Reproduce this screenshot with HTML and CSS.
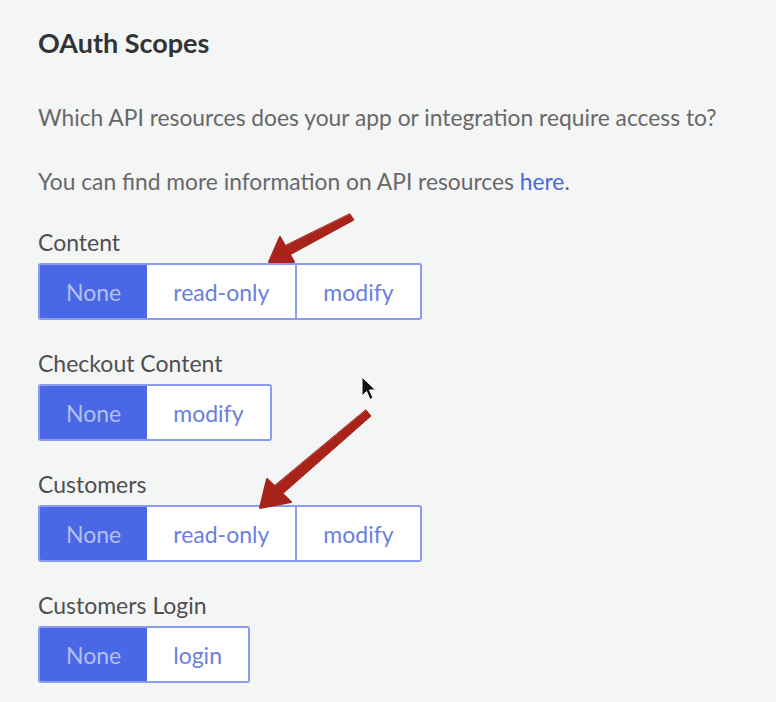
FILE: index.html
```html
<!DOCTYPE html>
<html lang="en">
<head>
<meta charset="utf-8">
<title>OAuth Scopes</title>
<link rel="stylesheet" href="styles.css">
</head>
<body>
<div class="panel">
  <h2 class="title">OAuth Scopes</h2>
  <p class="text first">Which API resources does your app or integration require access to?</p>
  <p class="text second">You can find more information on API resources <a class="link" href="#">here</a>.</p>

  <div class="field">
    <div class="label">Content</div>
    <div class="seg">
      <span class="opt active">None</span>
      <span class="opt">read-only</span>
      <span class="opt">modify</span>
    </div>
  </div>

  <div class="field">
    <div class="label">Checkout Content</div>
    <div class="seg">
      <span class="opt active">None</span>
      <span class="opt">modify</span>
    </div>
  </div>

  <div class="field">
    <div class="label">Customers</div>
    <div class="seg">
      <span class="opt active">None</span>
      <span class="opt">read-only</span>
      <span class="opt">modify</span>
    </div>
  </div>

  <div class="field">
    <div class="label">Customers Login</div>
    <div class="seg">
      <span class="opt active">None</span>
      <span class="opt">login</span>
    </div>
  </div>

  <svg class="overlay" width="776" height="702" viewBox="0 0 776 702" aria-hidden="true">
    <g fill="#a8231a" stroke="#a8231a" stroke-linecap="round" stroke-linejoin="round">
      <polygon points="350,214 354,220 286,257 281,248" stroke-width="1"/>
      <polygon points="269,262 280,237 294,262" stroke-width="2"/>
      <polygon points="366,410 371,416 279,497 271,489" stroke-width="1"/>
      <polygon points="260,508 267,479 291,502" stroke-width="2"/>
    </g>
    <path d="M362 377 L362 396 L366.5 391.5 L370 399.5 L373 398 L369.5 390 L375.5 390 Z" fill="#111" stroke="#fff" stroke-width="1"/>
  </svg>
</div>
</body>
</html>
```

FILE: styles.css
```css
html, body {
  margin: 0;
  padding: 0;
  background: #f4f5f5;
}

.panel {
  position: relative;
  width: 776px;
  height: 702px;
  box-sizing: border-box;
  padding: 27px 0 0 38px;
  font-family: Lato, "Open Sans", sans-serif;
  overflow: hidden;
}

.title {
  margin: 0;
  font-size: 27px;
  line-height: 32px;
  font-weight: 700;
  color: #333336;
}

.text {
  margin: 0;
  font-size: 22.8px;
  line-height: 28px;
  color: #68686a;
}

.text.first { margin-top: 44px; }
.text.second { margin-top: 36px; }

.link {
  color: #4a66de;
  text-decoration: none;
}

.field { margin-top: 29px; }
.field:first-of-type { margin-top: 33px; }

.label {
  font-size: 23px;
  line-height: 28px;
  color: #4f4f52;
}

.seg {
  display: inline-flex;
  margin-top: 7px;
  height: 57px;
  box-sizing: border-box;
  border: 2px solid #8b9cee;
  border-radius: 3px;
  background: #fff;
  overflow: hidden;
}

.opt {
  display: flex;
  align-items: center;
  padding: 0 26px;
  font-size: 23px;
  color: #6a7fe0;
}

.opt + .opt { border-left: 2px solid #8b9cee; }
.opt.active + .opt { border-left: 0; }

.opt.active {
  background: #4a68e6;
  color: #b3bff2;
}

.overlay {
  position: absolute;
  left: 0;
  top: 0;
  pointer-events: none;
}
```
